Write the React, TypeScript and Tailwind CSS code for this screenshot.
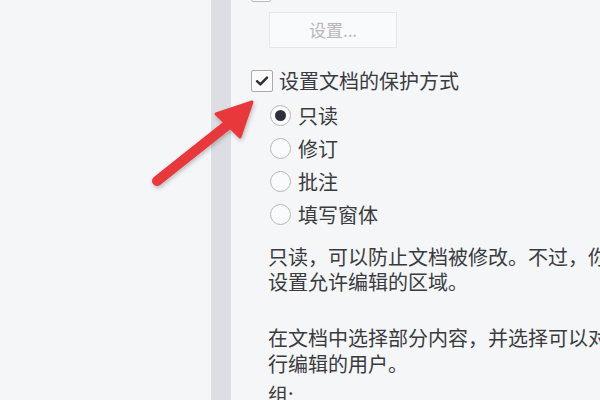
import React from "react";

const font = { fontFamily: '"Noto Sans CJK SC", "Noto Sans", sans-serif' };

function Radio({ checked, label }: { checked?: boolean; label: string }) {
  return (
    <div className="flex h-[33px] items-center">
      <div className="flex h-[21px] w-[21px] items-center justify-center rounded-full border border-[#b4b6ba] bg-[#fafbfc]">
        {checked && <div className="h-[11px] w-[11px] rounded-full bg-[#2e303a]" />}
      </div>
      <span className="ml-[7px] text-[20px] leading-none text-[#3a3b3e]">{label}</span>
    </div>
  );
}

export default function App() {
  return (
    <div
      className="relative flex h-[400px] w-[600px] overflow-hidden bg-[#f5f6f8]"
      style={font}
    >
      <div className="w-[211px] shrink-0 bg-[#f5f6f8]" />
      <div className="w-[20px] shrink-0 bg-[#dcdee3]" />
      <div className="flex min-w-0 flex-1 flex-col pl-[20px]">
        <div className="mt-[-19px] h-[21px] w-[20px] shrink-0 rounded-[2px] border border-[#b8babf] bg-[#fbfbfc]" />
        <div className="ml-[18px] mt-[10px] flex h-[36px] w-[128px] shrink-0 items-center justify-center border border-[#e6e7ea] bg-[#f9fafb] text-[17px] text-[#b6b7ba]">
          设置...
        </div>
        <div className="mt-[22px] flex items-center">
          <div className="flex h-[22px] w-[22px] items-center justify-center rounded-[2px] border border-[#a9abb0] bg-[#fbfbfc]">
            <svg width="14" height="12" viewBox="0 0 14 12">
              <path d="M2 6.2 L5.4 9.4 L12 2.6" fill="none" stroke="#2c2d33" strokeWidth="2.4" strokeLinecap="round" strokeLinejoin="round" />
            </svg>
          </div>
          <span className="ml-[6px] text-[20px] leading-none text-[#3a3b3e]">设置文档的保护方式</span>
        </div>
        <div className="ml-[19px] mt-[7px] flex flex-col">
          <Radio checked label="只读" />
          <Radio label="修订" />
          <Radio label="批注" />
          <Radio label="填写窗体" />
        </div>
        <div className="ml-[17px] mt-[13px] whitespace-nowrap text-[20px] leading-[25px] text-[#3a3b3e]">
          <div>只读，可以防止文档被修改。不过，你可以</div>
          <div>设置允许编辑的区域。</div>
        </div>
        <div className="ml-[17px] mt-[31px] whitespace-nowrap text-[20px] leading-[26px] text-[#3a3b3e]">
          <div>在文档中选择部分内容，并选择可以对其进</div>
          <div>行编辑的用户。</div>
        </div>
        <div className="ml-[17px] mt-[5px] whitespace-nowrap text-[20px] leading-[25px] text-[#3a3b3e]">组:</div>
      </div>
      <svg className="pointer-events-none absolute left-0 top-0" width="600" height="400" viewBox="0 0 600 400">
        <defs>
          <filter id="sh" x="-20%" y="-20%" width="140%" height="140%">
            <feDropShadow dx="1" dy="2" stdDeviation="2" floodColor="#000" floodOpacity="0.25" />
          </filter>
        </defs>
        <g filter="url(#sh)" fill="#e8393b" stroke="#e8393b">
          <line x1="157" y1="181" x2="230" y2="123" strokeWidth="10" strokeLinecap="round" />
          <polygon points="252,102 216,114 240,137" strokeWidth="3" strokeLinejoin="round" />
        </g>
      </svg>
    </div>
  );
}
